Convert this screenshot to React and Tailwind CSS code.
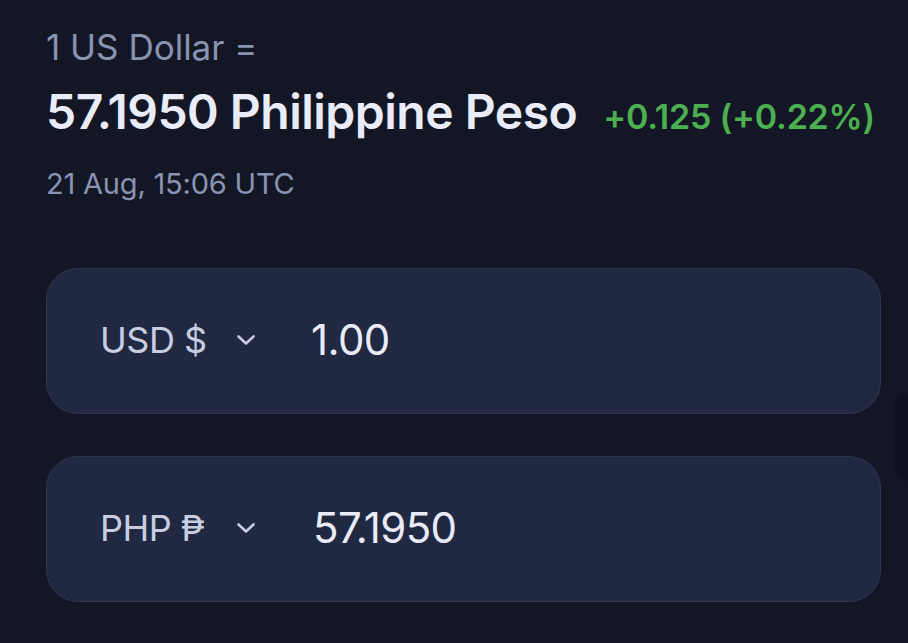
import React from "react";

function Chevron() {
  return (
    <svg width="22" height="14" viewBox="0 0 22 14" fill="none">
      <path d="M3.5 3.5 L11 10.5 L18.5 3.5" stroke="#c5cbe0" strokeWidth="2.6" strokeLinecap="round" strokeLinejoin="round" />
    </svg>
  );
}

function Card({ code, value, valueMl, valueSize }) {
  return (
    <div className="h-[146px] w-[835px] rounded-[32px] bg-[#212841] border border-[#2e3651] flex items-center pl-[53px] pb-[2px]">
      <span className="text-[36px] leading-[44px] text-[#c8cee2] tracking-[-0.5px] w-[119px]">{code}</span>
      <span className="ml-[16px]"><Chevron /></span>
      <span className={"leading-[44px] text-[#e9ecf8] tracking-[-0.6px] " + valueMl + " " + valueSize}>{value}</span>
    </div>
  );
}

export default function App() {
  return (
    <div className="w-[908px] h-[643px] bg-[#131725] overflow-hidden relative" style={{ fontFamily: "Inter, 'Noto Sans', sans-serif" }}>
      <div className="pl-[46px] pt-[26px] flex flex-col">
        <div className="text-[35px] leading-[42px] text-[#8a93b1] tracking-[0px]">1 US Dollar =</div>
        <div className="flex items-baseline mt-[18px]">
          <span className="text-[48px] leading-[52px] font-semibold text-[#eaedf9] tracking-[-0.5px]">57.1950 Philippine Peso</span>
          <span className="ml-[26px] text-[34px] font-semibold text-[#4caf50] tracking-[-0.2px]">+0.125 (+0.22%)</span>
        </div>
        <div className="mt-[24px] text-[29px] leading-[36px] text-[#8a93b1] tracking-[-0.2px]">21 Aug, 15:06 UTC</div>
        <div className="mt-[66px] flex flex-col gap-[42px]">
          <Card code="USD $" value="1.00" valueMl="ml-[54px]" valueSize="text-[42px]" />
          <Card code="PHP ₱" value="57.1950" valueMl="ml-[56px]" valueSize="text-[42px]" />
        </div>
      </div>
      <div className="absolute left-[893px] top-[393px] w-[40px] h-[88px] rounded-[16px] bg-[#0e1220]" />
    </div>
  );
}
